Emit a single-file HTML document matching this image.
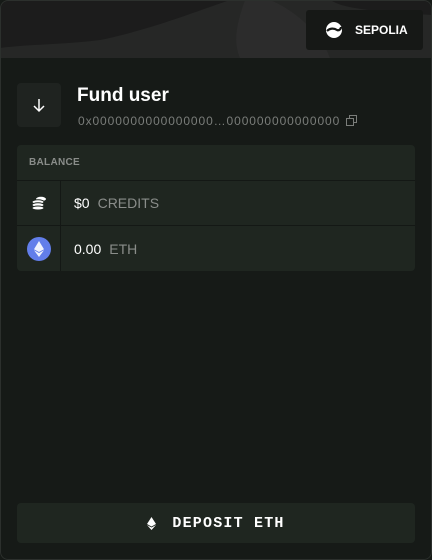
<!DOCTYPE html>
<html><head><style>
*{margin:0;padding:0;box-sizing:border-box}
body{width:432px;height:560px;background:#161a17;font-family:"Liberation Sans",sans-serif;overflow:hidden;position:relative}
.card{position:absolute;inset:0;border-radius:8px;overflow:hidden;background:#161a17}
.card:after{content:"";position:absolute;inset:0;border:1px solid #2c302d;border-radius:8px;pointer-events:none}
.hdr{position:absolute;left:0;top:0;width:432px;height:58px;background:#262726;overflow:hidden}
.net{position:absolute;left:306px;top:10px;width:117px;height:40px;background:#161816;border-radius:3px;color:#fff;font-weight:bold;font-size:12px;display:flex;align-items:center}
.ab{position:absolute;left:17px;top:83px;width:44px;height:44px;background:#1f2320;border-radius:4px;display:flex;align-items:center;justify-content:center}
.t{position:absolute;left:77px;top:85px;color:#fff;font-size:19px;font-weight:bold}
.ad{position:absolute;left:78px;top:114px;color:#7a7d7a;font-size:12px;letter-spacing:.9px}
.bal{position:absolute;left:17px;top:145px;width:398px;height:126px;background:#1f2620;border-radius:4px}
.bh{height:36px;border-bottom:1px solid #141815;color:#8a8d8a;font-size:10px;font-weight:bold;padding:12px 12px;letter-spacing:.3px}
.row{height:45px;display:flex;border-bottom:1px solid #141815}
.row:last-child{border:none}
.ic{width:44px;border-right:1px solid #141815;display:flex;align-items:center;justify-content:center}
.v{padding-left:13px;display:flex;align-items:center;font-size:14px;color:#fff}
.v span{color:#8a8d8a;margin-left:8px}
.btn{position:absolute;left:17px;top:503px;width:398px;height:40px;background:#1f2620;border-radius:4px;display:flex;align-items:center;justify-content:center;color:#fff;font-family:"Liberation Mono",monospace;font-weight:bold;font-size:15px;letter-spacing:1.2px}
</style></head><body>
<div class="card">
<div class="hdr">
<svg width="432" height="58" style="position:absolute;left:0;top:0"><path d="M0 0H230C200 10 150 30 100 40C60 45 30 44 0 48Z" fill="#1c1c1c"/><path d="M245 0C238 20 232 40 240 58H330C320 30 290 8 270 0Z" fill="#2c2c2c"/><path d="M330 0C340 5 345 10 432 15V0Z" fill="#1c1c1c"/></svg>
<div class="net"><svg width="18" height="18" viewBox="0 0 18 18" style="margin:0 12px 0 19px"><circle cx="9" cy="9" r="8" fill="#fff"/><path d="M2 10C5 7 9 7 12 9C14 10 16 8 16 6" stroke="#161816" stroke-width="2.2" fill="none"/></svg>SEPOLIA</div>
</div>
<div class="ab"><svg width="16" height="16" viewBox="0 0 16 16"><path d="M8 2V14M3 9L8 14L13 9" stroke="#fff" stroke-width="1.5" fill="none"/></svg></div>
<div class="t">Fund user</div>
<div class="ad">0x0000000000000000…000000000000000 <svg width="11" height="11" viewBox="0 0 11 11" style="margin-left:2px;vertical-align:-1px"><rect x="3.5" y="0.5" width="7" height="7" stroke="#7a7d7a" fill="none"/><rect x="0.5" y="3.5" width="7" height="7" stroke="#7a7d7a" fill="#161a17"/></svg></div>
<div class="bal">
<div class="bh">BALANCE</div>
<div class="row"><div class="ic"><svg width="16" height="14" viewBox="0 0 16 14"><ellipse cx="10" cy="3" rx="5" ry="2.2" fill="#fff"/><ellipse cx="7" cy="6" rx="6" ry="2.2" fill="#fff" stroke="#1f2620"/><ellipse cx="7" cy="9" rx="6" ry="2.2" fill="#fff" stroke="#1f2620"/><ellipse cx="7" cy="12" rx="6" ry="2" fill="#fff" stroke="#1f2620"/></svg></div><div class="v">$0<span>CREDITS</span></div></div>
<div class="row"><div class="ic"><svg width="24" height="24" viewBox="0 0 24 24"><circle cx="12" cy="12" r="12" fill="#627eea"/><path d="M12 4L7 12.2L12 15L17 12.2Z" fill="#fff" opacity=".9"/><path d="M12 16L7 13.3L12 20L17 13.3Z" fill="#fff" opacity=".9"/></svg></div><div class="v">0.00<span>ETH</span></div></div>
</div>
<div class="btn"><svg width="9" height="13" viewBox="0 0 9 13" style="margin-right:16px"><path d="M4.5 0L0 7L4.5 9.5L9 7Z" fill="#fff"/><path d="M4.5 10.5L0 8L4.5 13L9 8Z" fill="#fff"/></svg>DEPOSIT ETH</div>
</div>
</body></html>
